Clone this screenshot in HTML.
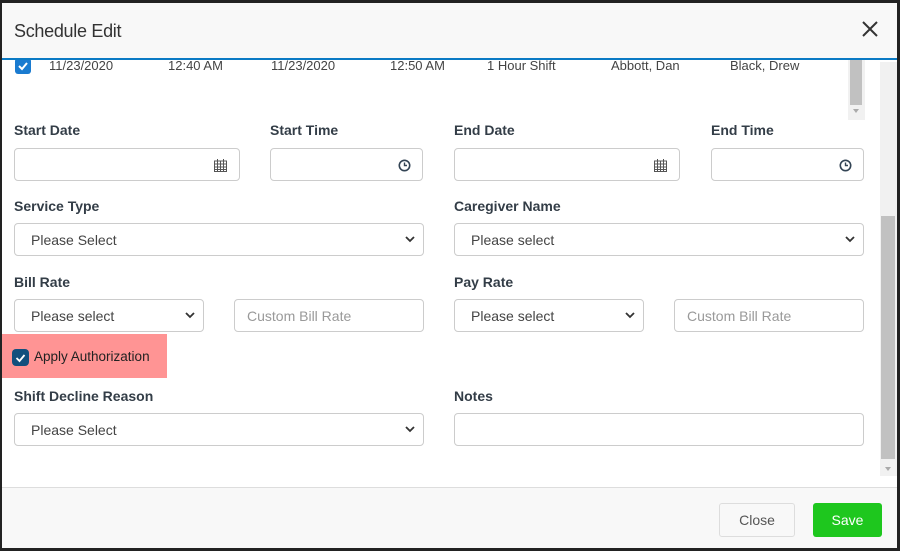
<!DOCTYPE html>
<html><head><meta charset="utf-8"><style>
*{box-sizing:border-box;margin:0;padding:0}
body{width:900px;height:551px;background:#222;font-family:"Liberation Sans",sans-serif;position:relative;overflow:hidden}
.modal{position:absolute;left:2px;top:3px;width:895px;height:545px;background:#fff;overflow:hidden}
.hdr{position:absolute;left:0;top:0;width:895px;height:57px;background:#f8f8f8;border-bottom:2px solid #0a7ac4;z-index:2}
.hdr h1{position:absolute;left:12px;top:18px;font-size:18px;font-weight:normal;color:#333;letter-spacing:-0.3px}
.x{position:absolute;left:858px;top:16px}
.a{position:absolute}
.lbl{font-size:14px;font-weight:bold;color:#333d47}
.in{border:1px solid #ccc;border-radius:4px;background:#fff;height:33px}
.ph{font-size:14px;color:#444;position:absolute;left:16px;top:8px}
.pg{color:#999}
.chev{position:absolute;right:8px;top:11px}
.row{font-size:13px;color:#444;top:55px}
</style></head><body>
<div class="modal">
<div class="hdr"><h1>Schedule Edit</h1>
<svg class="x" width="20" height="20" viewBox="0 0 20 20"><path d="M3 3L17 17M17 3L3 17" stroke="#333" stroke-width="2"/></svg></div>
<div class="a" style="left:13px;top:55px;width:16px;height:16px;background:#1a7bd0;border-radius:3px"><svg width="16" height="16"><path d="M4 8l3 3 5-6" stroke="#fff" stroke-width="2" fill="none"/></svg></div>
<div class="a row" style="left:47px">11/23/2020</div>
<div class="a row" style="left:166px">12:40 AM</div>
<div class="a row" style="left:269px">11/23/2020</div>
<div class="a row" style="left:388px">12:50 AM</div>
<div class="a row" style="left:485px">1 Hour Shift</div>
<div class="a row" style="left:609px">Abbott, Dan</div>
<div class="a row" style="left:728px">Black, Drew</div>
<div class="a" style="left:846px;top:57px;width:17px;height:60px;background:#f1f1f1"><div style="position:absolute;left:2px;top:0;width:12px;height:45px;background:#c1c1c1"></div><div style="position:absolute;left:5px;top:49px;width:0;height:0;border-left:3px solid transparent;border-right:3px solid transparent;border-top:4px solid #aaa"></div><div style="position:absolute;left:33px;top:8px;width:0;height:0;border-left:3px solid transparent;border-right:3px solid transparent;border-bottom:4px solid #555"></div></div>
<div class="a" style="left:878px;top:59px;width:17px;height:414px;background:#f1f1f1"><div style="position:absolute;left:1px;top:154px;width:14px;height:243px;background:#c1c1c1"></div><div style="position:absolute;left:5px;top:405px;width:0;height:0;border-left:3px solid transparent;border-right:3px solid transparent;border-top:4px solid #aaa"></div></div>

<div class="a lbl" style="left:12px;top:119px">Start Date</div>
<div class="a lbl" style="left:268px;top:119px">Start Time</div>
<div class="a lbl" style="left:452px;top:119px">End Date</div>
<div class="a lbl" style="left:709px;top:119px">End Time</div>
<div class="a in" style="left:12px;top:145px;width:226px"><svg class="a" style="right:12px;top:10px" width="13" height="13"><rect x="0.5" y="2" width="12" height="10.5" fill="none" stroke="#555"/><path d="M0.5 5h12M0.5 8h12M0.5 10.5h12M3.5 2v10.5M6.5 2v10.5M9.5 2v10.5M3.5 0v3M9.5 0v3" stroke="#555" stroke-width="1"/></svg></div>
<div class="a in" style="left:268px;top:145px;width:153px"><svg class="a" style="right:11px;top:10px" width="13" height="13"><circle cx="6.5" cy="6.5" r="5.2" stroke="#345" stroke-width="1.6" fill="none"/><path d="M6.5 3.5v3h2.5" stroke="#345" stroke-width="1.4" fill="none"/></svg></div>
<div class="a in" style="left:452px;top:145px;width:226px"><svg class="a" style="right:12px;top:10px" width="13" height="13"><rect x="0.5" y="2" width="12" height="10.5" fill="none" stroke="#555"/><path d="M0.5 5h12M0.5 8h12M0.5 10.5h12M3.5 2v10.5M6.5 2v10.5M9.5 2v10.5M3.5 0v3M9.5 0v3" stroke="#555" stroke-width="1"/></svg></div>
<div class="a in" style="left:709px;top:145px;width:153px"><svg class="a" style="right:11px;top:10px" width="13" height="13"><circle cx="6.5" cy="6.5" r="5.2" stroke="#345" stroke-width="1.6" fill="none"/><path d="M6.5 3.5v3h2.5" stroke="#345" stroke-width="1.4" fill="none"/></svg></div>

<div class="a lbl" style="left:12px;top:195px">Service Type</div>
<div class="a lbl" style="left:452px;top:195px">Caregiver Name</div>
<div class="a in" style="left:12px;top:220px;width:410px"><span class="ph">Please Select</span><svg class="chev" width="10" height="8"><path d="M1 2l4 4 4-4" stroke="#333" stroke-width="1.8" fill="none"/></svg></div>
<div class="a in" style="left:452px;top:220px;width:410px"><span class="ph">Please select</span><svg class="chev" width="10" height="8"><path d="M1 2l4 4 4-4" stroke="#333" stroke-width="1.8" fill="none"/></svg></div>

<div class="a lbl" style="left:12px;top:271px">Bill Rate</div>
<div class="a lbl" style="left:452px;top:271px">Pay Rate</div>
<div class="a in" style="left:12px;top:296px;width:190px"><span class="ph">Please select</span><svg class="chev" width="10" height="8"><path d="M1 2l4 4 4-4" stroke="#333" stroke-width="1.8" fill="none"/></svg></div>
<div class="a in" style="left:232px;top:296px;width:190px"><span class="ph pg" style="left:12px">Custom Bill Rate</span></div>
<div class="a in" style="left:452px;top:296px;width:190px"><span class="ph">Please select</span><svg class="chev" width="10" height="8"><path d="M1 2l4 4 4-4" stroke="#333" stroke-width="1.8" fill="none"/></svg></div>
<div class="a in" style="left:672px;top:296px;width:190px"><span class="ph pg" style="left:12px">Custom Bill Rate</span></div>

<div class="a" style="left:0;top:331px;width:165px;height:44px;background:#ff9494"></div>
<div class="a" style="left:10px;top:346px;width:17px;height:17px;background:#124f7d;border-radius:4px"><svg width="17" height="17"><path d="M4.5 9l3 3 5-6" stroke="#fff" stroke-width="1.8" fill="none"/></svg></div>
<div class="a" style="left:32px;top:346px;font-size:13.5px;color:#222">Apply Authorization</div>

<div class="a lbl" style="left:12px;top:385px">Shift Decline Reason</div>
<div class="a lbl" style="left:452px;top:385px">Notes</div>
<div class="a in" style="left:12px;top:410px;width:410px"><span class="ph">Please Select</span><svg class="chev" width="10" height="8"><path d="M1 2l4 4 4-4" stroke="#333" stroke-width="1.8" fill="none"/></svg></div>
<div class="a in" style="left:452px;top:410px;width:410px"></div>

<div class="a" style="left:0;top:484px;width:895px;height:61px;background:#f8f8f8;border-top:1px solid #ddd"></div>
<div class="a" style="left:717px;top:500px;width:76px;height:34px;border:1px solid #ddd;border-radius:3px;background:#f8f8f8;font-size:14px;color:#555;text-align:center;line-height:32px">Close</div>
<div class="a" style="left:811px;top:500px;width:69px;height:34px;border-radius:3px;background:#1ec71e;font-size:14px;color:#fff;text-align:center;line-height:34px">Save</div>
</div>
</body></html>
